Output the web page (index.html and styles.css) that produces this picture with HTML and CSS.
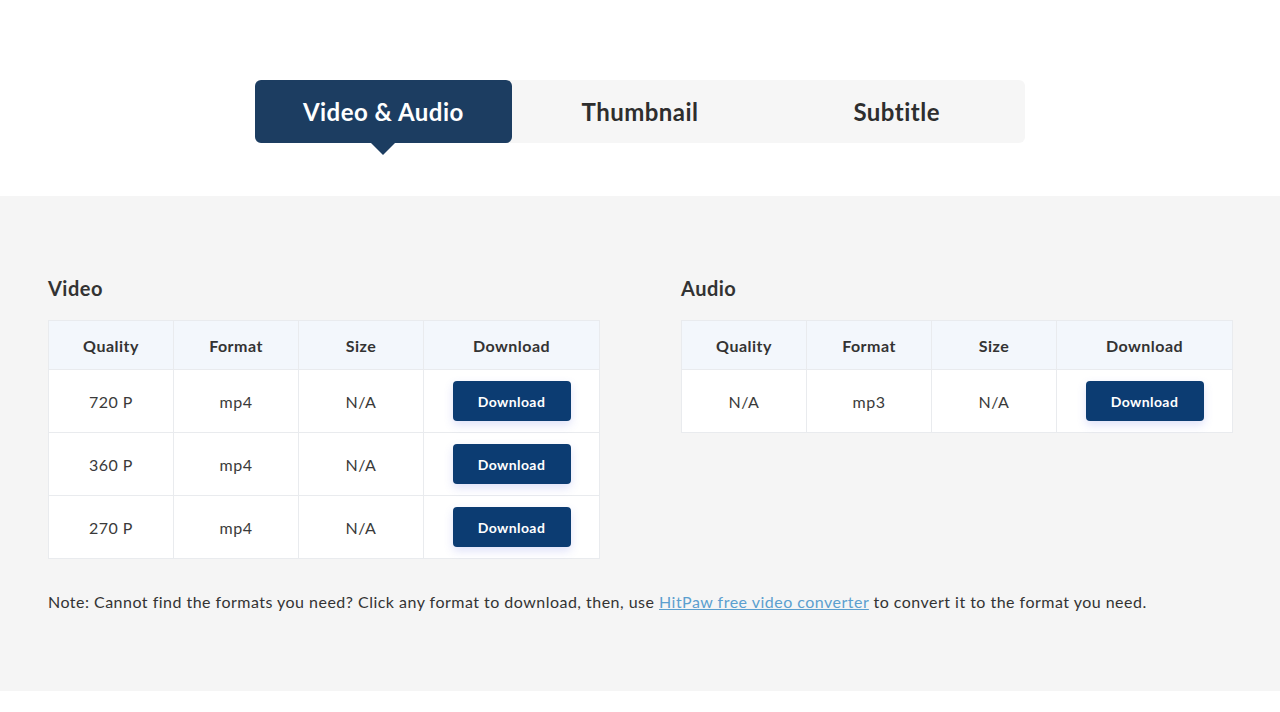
FILE: index.html
```html
<!DOCTYPE html>
<html lang="en">
<head>
<meta charset="utf-8">
<title>Download</title>
<link rel="stylesheet" href="styles.css">
</head>
<body>
<header class="top">
  <nav class="tabs">
    <div class="tab active">Video &amp; Audio</div>
    <div class="tab">Thumbnail</div>
    <div class="tab">Subtitle</div>
  </nav>
</header>
<main class="panel">
  <div class="tables">
    <section class="block">
      <h2 class="title">Video</h2>
      <table class="grid">
        <thead>
          <tr><th>Quality</th><th>Format</th><th>Size</th><th class="dl">Download</th></tr>
        </thead>
        <tbody>
          <tr><td>720 P</td><td>mp4</td><td>N/A</td><td class="dl"><button class="btn">Download</button></td></tr>
          <tr><td>360 P</td><td>mp4</td><td>N/A</td><td class="dl"><button class="btn">Download</button></td></tr>
          <tr><td>270 P</td><td>mp4</td><td>N/A</td><td class="dl"><button class="btn">Download</button></td></tr>
        </tbody>
      </table>
    </section>
    <section class="block">
      <h2 class="title">Audio</h2>
      <table class="grid">
        <thead>
          <tr><th>Quality</th><th>Format</th><th>Size</th><th class="dl">Download</th></tr>
        </thead>
        <tbody>
          <tr><td>N/A</td><td>mp3</td><td>N/A</td><td class="dl"><button class="btn">Download</button></td></tr>
        </tbody>
      </table>
    </section>
  </div>
  <p class="note">Note: Cannot find the formats you need? Click any format to download, then, use <a href="#" class="link">HitPaw free video converter</a> to convert it to the format you need.</p>
</main>
</body>
</html>
```

FILE: styles.css
```css
* { box-sizing: border-box; }
html, body { margin: 0; padding: 0; background: #ffffff; }
body {
  font-family: Lato, "Open Sans", sans-serif;
  color: #333333;
  width: 1280px;
  letter-spacing: 0.03em;
}
.top {
  height: 196px;
  padding-top: 80px;
  display: flex;
  justify-content: center;
}
.tabs {
  display: flex;
  width: 770px;
  height: 63px;
  background: #f6f6f6;
  border-radius: 6px;
}
.tab {
  flex: 1;
  display: flex;
  align-items: center;
  justify-content: center;
  font-size: 24px;
  font-weight: 700;
  color: #2e2e2e;
  position: relative;
  border-radius: 6px;
}
.tab.active {
  background: #1c3d61;
  color: #ffffff;
}
.tab.active::after {
  content: "";
  position: absolute;
  left: 50%;
  bottom: -12px;
  margin-left: -12px;
  border-left: 12px solid transparent;
  border-right: 12px solid transparent;
  border-top: 12px solid #1c3d61;
}
.panel {
  background: #f5f5f5;
  height: 495px;
  padding: 78px 48px 0;
}
.tables {
  display: flex;
  gap: 82px;
}
.block { width: 551px; }
.title {
  margin: 0 0 18px;
  font-size: 20px;
  font-weight: 700;
  line-height: 28px;
  color: #333333;
}
.grid {
  width: 551px;
  border-collapse: collapse;
  background: #ffffff;
  table-layout: fixed;
}
.grid th, .grid td {
  border: 1px solid #e9ebee;
  text-align: center;
  font-size: 16px;
  color: #333333;
  padding: 0;
}
.grid th {
  background: #f3f7fc;
  height: 49px;
  font-weight: 700;
  width: 125px;
}
.grid th.dl { width: 176px; }
.grid td {
  height: 63px;
  font-weight: 400;
  color: #3a3a3a;
}
.btn {
  width: 118px;
  height: 40px;
  border: none;
  border-radius: 4px;
  background: #0c3c72;
  color: #ffffff;
  font-family: Lato, "Open Sans", sans-serif;
  font-size: 14px;
  font-weight: 700;
  letter-spacing: 0.03em;
  box-shadow: 0 4px 10px rgba(80, 90, 220, 0.18);
  cursor: pointer;
}
.note {
  margin: 31px 0 0;
  font-size: 16px;
  line-height: 24px;
  color: #333333;
}
.link {
  color: #5b9fcf;
  text-decoration: underline;
}
```
